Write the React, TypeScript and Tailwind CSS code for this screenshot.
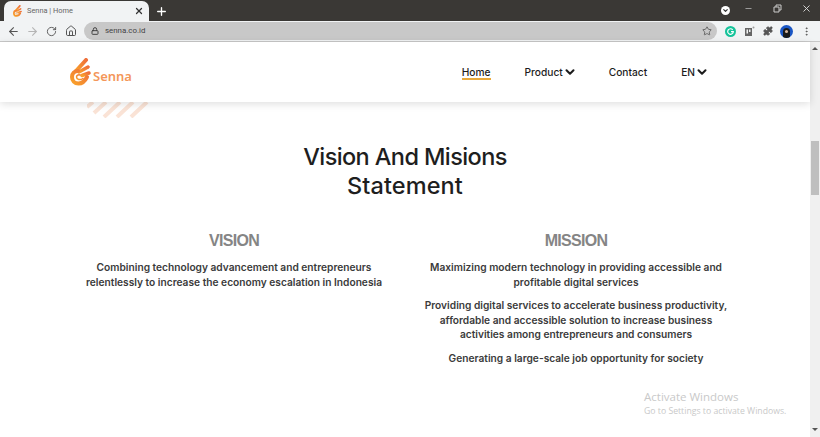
import { ArrowLeft, ArrowRight, RotateCw, Home, Lock, Star, Puzzle, EllipsisVertical, X, Plus, Minus, ChevronDown } from "lucide-react";

function Logo({ w = 21, h = 28, id }: { w?: number; h?: number; id: string }) {
  return (
    <svg width={w} height={h} viewBox="0 0 21 28" fill="none" strokeLinecap="round">
      <defs>
        <linearGradient id={id} x1="0" y1="1" x2="1" y2="0">
          <stop offset="0" stopColor="#f9a22a" />
          <stop offset="1" stopColor="#ee6f3a" />
        </linearGradient>
      </defs>
      <g stroke={`url(#${id})`}>
        <path d="M16 2 L6 13" strokeWidth="4" />
        <path d="M18 9 L9 14" strokeWidth="3.500" />
        <path d="M19 15 L12 17.500" strokeWidth="3.500" />
        <path d="M17 19 C15 23 12 25.500 8.500 25.500 C4.500 25.500 2 22.500 2 19 C2 15.500 4.500 13 8 13" strokeWidth="4" />
        <path d="M13 20.500 C10 22.500 6.500 21.500 6.500 19 C6.500 17.500 8 16.500 10 17" strokeWidth="1.500" />
      </g>
    </svg>
  );
}

function Hatch() {
  return (
    <svg width="62" height="16" viewBox="0 0 62 16" className="absolute left-[87px] top-0">
      <g stroke="#fae3d6" strokeWidth="4">
        <path d="M6 0 L0 5" />
        <path d="M19 0 L7 11" />
        <path d="M33 0 L17 15" />
        <path d="M46 0 L30 15" />
        <path d="M60 0 L44 15" />
      </g>
    </svg>
  );
}

function Browser() {
  return (
    <div className="shrink-0">
      <div className="h-[21px] bg-[#3a3835] flex items-end text-[#dedede]">
        <div className="ml-[4px] w-[145px] h-[20px] bg-[#f1f3f4] rounded-t-[7px] flex items-center pl-[9px] pr-[5px] gap-[5px]">
          <Logo w={9} h={12} id="tabg" />
          <span className="text-[7.400px] text-[#666] flex-1 font-['Roboto',sans-serif]">Senna | Home</span>
          <X size={10} strokeWidth={3} className="text-[#333]" />
        </div>
        <Plus size={13} strokeWidth={2.5} className="ml-[6px] mb-[3px] text-white" />
        <div className="flex-1" />
        <div className="mb-[6px] mr-[14px] w-[9px] h-[9px] rounded-full bg-white flex items-center justify-center">
          <ChevronDown size={7} strokeWidth={4} className="text-[#333]" />
        </div>
        <Minus size={9} className="mb-[8px] mr-[20px] text-[#bbb]" />
        <svg width="9" height="9" viewBox="0 0 9 9" className="mb-[8px] mr-[19px]">
          <path d="M1 3h5v5h-5zM3 3V1h5v5H6" fill="none" stroke="#ccc" />
        </svg>
        <X size={11} className="mb-[7px] mr-[8px] text-[#ddd]" />
      </div>
      <div className="h-[21px] bg-[#f1f3f4] border-b border-[#c8c8c8] flex items-center text-[#555]">
        <ArrowLeft size={13} className="ml-[7px]" />
        <ArrowRight size={13} className="ml-[6px] text-[#b5b5b5]" />
        <RotateCw size={11} className="ml-[7px]" />
        <Home size={12} className="ml-[8px]" />
        <div className="ml-[7px] w-[633px] h-[18px] rounded-full bg-[#c8c8c8] flex items-center pl-[7px] pr-[5px]">
          <Lock size={8} strokeWidth={3} className="text-[#444]" />
          <span className="ml-[6px] text-[7.900px] text-[#444] flex-1 font-['Roboto',sans-serif]">senna.co.id</span>
          <Star size={10} className="text-[#555]" />
        </div>
        <svg width="11" height="11" viewBox="0 0 11 11" className="ml-[8px]">
          <circle cx="5.500" cy="5.500" r="5.500" fill="#15c39a" />
          <path d="M7.700 3.800 A2.800 2.800 0 1 0 8.300 5.700 H6" fill="none" stroke="#fff" strokeWidth="1.200" />
        </svg>
        <svg width="11" height="11" viewBox="0 0 11 11" className="ml-[8px]">
          <path d="M1 2h7v8H1z" fill="#666" />
          <path d="M2.500 3.500h1.500v4H2.500zM5 3.500h1.500v2.500H5z" fill="#f1f3f4" />
          <circle cx="9.500" cy="1.500" r="1" fill="#999" />
        </svg>
        <Puzzle size={10} fill="#555" className="ml-[8px]" />
        <div className="ml-[7px] w-[13px] h-[13px] rounded-full bg-[#1a56c4] flex items-end justify-center overflow-hidden">
          <div className="w-[7px] h-[10px] rounded-t-full bg-[#1a1a1a] flex justify-center pt-[2px]">
            <div className="w-[3px] h-[3px] rounded-full bg-[#d8b8a0]" />
          </div>
        </div>
        <EllipsisVertical size={11} className="ml-[8px]" />
      </div>
    </div>
  );
}

function Scrollbar() {
  return (
    <div className="w-[10px] bg-[#f0f0f0] flex flex-col items-center shrink-0">
      <div className="mt-[5px] h-0 w-0 border-x-[3px] border-x-transparent border-b-[3px] border-b-[#555]" />
      <div className="mt-[91px] w-[8px] h-[54px] bg-[#bfbfbf]" />
      <div className="flex-1" />
      <div className="mb-[6px] h-0 w-0 border-x-[3px] border-x-transparent border-t-[3px] border-t-[#555]" />
    </div>
  );
}

export default function App() {
  const nav = "text-[10.200px] font-medium text-[#1c1c1c]";
  const body = "text-[10.200px] leading-[14.600px] font-semibold text-[#3b3b3b] text-center";
  const title = "text-center text-[16px] leading-[22px] font-semibold tracking-[-0.7px] text-[#858585] font-['Liberation_Sans',sans-serif]";
  return (
    <div className="w-[820px] h-[437px] overflow-hidden flex flex-col bg-white font-['Inter',sans-serif] relative">
      <Browser />
      <div className="flex-1 flex min-h-0">
        <div className="flex-1 flex flex-col min-w-0">
          <header className="h-[60px] bg-white shadow-[0_2px_8px_rgba(0,0,0,0.13)] relative z-10 flex items-center pl-[70px] shrink-0">
            <div className="flex items-center">
              <Logo id="headg" />
              <span className="ml-[2px] mt-[9px] text-[13px] font-semibold text-[#f4975a] font-['Noto_Sans',sans-serif]">Senna</span>
            </div>
            <nav className="ml-auto mr-[101px] flex items-center">
              <span className={`${nav} leading-[12px] border-b-2 border-[#e8a93c] mt-[2px]`}>Home</span>
              <span className={`${nav} leading-[13px] ml-[34px] flex items-center`}>Product<ChevronDown size={14} strokeWidth={3.5} /></span>
              <span className={`${nav} leading-[13px] ml-[32px]`}>Contact</span>
              <span className={`${nav} leading-[13px] ml-[34px] flex items-center`}>EN<ChevronDown size={14} strokeWidth={3.5} /></span>
            </nav>
          </header>
          <main className="flex-1 relative">
            <Hatch />
            <h1 className="mt-[40px] text-center text-[23.500px] leading-[29px] font-medium tracking-[-0.6px] text-[#1e1e1e]">
              Vision And Misions<br /><span className="tracking-[0.1px]">Statement</span>
            </h1>
            <div className="mt-[30px] px-[63px] grid grid-cols-2">
              <section>
                <h2 className={title}>VISION</h2>
                <p className={`${body} mt-[8px]`}>
                  Combining technology advancement and entrepreneurs<br />relentlessly to increase the economy escalation in Indonesia
                </p>
              </section>
              <section>
                <h2 className={title}>MISSION</h2>
                <div className="mt-[8px] flex flex-col gap-[9px]">
                  <p className={body}>Maximizing modern technology in providing accessible and<br />profitable digital services</p>
                  <p className={body}>Providing digital services to accelerate business productivity,<br />affordable and accessible solution to increase business<br />activities among entrepreneurs and consumers</p>
                  <p className={body}>Generating a large-scale job opportunity for society</p>
                </div>
              </section>
            </div>
            <div className="absolute left-[644px] top-[287px] text-[#c9c9c9] font-['Open_Sans',sans-serif] whitespace-nowrap">
              <div className="text-[11.500px] leading-[16px]">Activate Windows</div>
              <div className="text-[8.700px] leading-[13px]">Go to Settings to activate Windows.</div>
            </div>
          </main>
        </div>
        <Scrollbar />
      </div>
    </div>
  );
}
